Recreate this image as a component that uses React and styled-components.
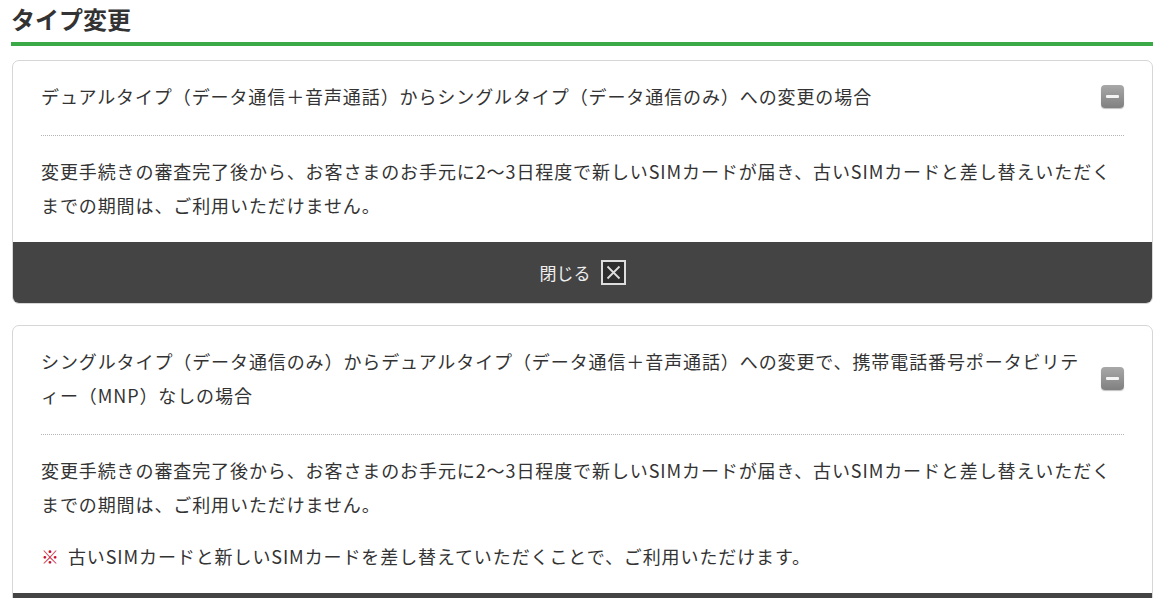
import React from 'react';
import styled, { createGlobalStyle } from 'styled-components';

const GlobalStyle = createGlobalStyle`
  body {
    margin: 0;
    background: #fff;
    font-family: "Noto Sans CJK JP", "Noto Sans", sans-serif;
    color: #333;
  }
`;

const Page = styled.div`
  padding: 0 15px 0 11px;
  line-break: loose;
`;

const Heading = styled.h2`
  margin: 0;
  padding: 3px 0 7px;
  font-size: 24px;
  line-height: 32px;
  font-weight: bold;
  color: #333;
  border-bottom: 4px solid #3aaa48;
`;

const Card = styled.section`
  margin: ${(p) => (p.$first ? '14px' : '21px')} 0 0 1px;
  border: 1px solid #d6d6d6;
  border-radius: 7px;
  background: #fff;
  overflow: hidden;
`;

const Head = styled.div`
  margin: 0 28px;
  padding: 18px 0 22px;
  display: flex;
  align-items: center;
  gap: 12px;
  border-bottom: 1px dotted #b5b5b5;
`;

const Title = styled.h3`
  flex: 1;
  margin: 0;
  font-size: 18px;
  line-height: 34px;
  font-weight: normal;
  letter-spacing: 0.9px;
  color: #333;
`;

const Toggle = styled.span`
  position: relative;
  width: 23px;
  height: 23px;
  flex-shrink: 0;
  border-radius: 4px;
  background: linear-gradient(#a8a8a8, #808080);
  box-shadow: 0 1px 1px rgba(0, 0, 0, 0.25);
  &::after {
    content: '';
    position: absolute;
    left: 5px;
    right: 5px;
    top: 10px;
    height: 3px;
    background: #f4f4f4;
    border-radius: 1px;
  }
`;

const Body = styled.div`
  padding: 18px 28px 20px;
`;

const Text = styled.p`
  margin: 0;
  font-size: 18px;
  line-height: 34px;
  letter-spacing: 0.9px;
  color: #333;
  & + & {
    margin-top: 18px;
  }
`;

const Mark = styled.span`
  color: #c8102e;
  margin-right: 8px;
`;

const CloseBar = styled.button`
  display: flex;
  width: 100%;
  height: 61px;
  align-items: center;
  justify-content: center;
  gap: 10px;
  border: 0;
  padding: 0;
  background: #444;
  color: #eee;
  font-family: inherit;
  font-size: 17px;
  cursor: pointer;
`;

const CloseBox = styled.span`
  display: flex;
  width: 25px;
  height: 25px;
  box-sizing: border-box;
  border: 2px solid #ddd;
  background: #2e2e2e;
  align-items: center;
  justify-content: center;
`;

const items = [
  {
    title: 'デュアルタイプ（データ通信＋音声通話）からシングルタイプ（データ通信のみ）への変更の場合',
    body: ['変更手続きの審査完了後から、お客さまのお手元に2〜3日程度で新しいSIMカードが届き、古いSIMカードと差し替えいただくまでの期間は、ご利用いただけません。'],
  },
  {
    title: 'シングルタイプ（データ通信のみ）からデュアルタイプ（データ通信＋音声通話）への変更で、携帯電話番号ポータビリティー（MNP）なしの場合',
    body: ['変更手続きの審査完了後から、お客さまのお手元に2〜3日程度で新しいSIMカードが届き、古いSIMカードと差し替えいただくまでの期間は、ご利用いただけません。'],
    note: '古いSIMカードと新しいSIMカードを差し替えていただくことで、ご利用いただけます。',
  },
];

function App() {
  return (
    <Page lang="ja">
      <GlobalStyle />
      <Heading>タイプ変更</Heading>
      {items.map((item, i) => (
        <Card key={i} $first={i === 0}>
          <Head>
            <Title>{item.title}</Title>
            <Toggle />
          </Head>
          <Body>
            {item.body.map((t, j) => (
              <Text key={j}>{t}</Text>
            ))}
            {item.note && (
              <Text>
                <Mark>※</Mark>
                {item.note}
              </Text>
            )}
          </Body>
          <CloseBar>
            閉じる
            <CloseBox>
              <svg width="15" height="15" viewBox="0 0 15 15">
                <path d="M1.5 1.5 L13.5 13.5 M13.5 1.5 L1.5 13.5" stroke="#ddd" strokeWidth="1.8" />
              </svg>
            </CloseBox>
          </CloseBar>
        </Card>
      ))}
    </Page>
  );
}

export default App;
